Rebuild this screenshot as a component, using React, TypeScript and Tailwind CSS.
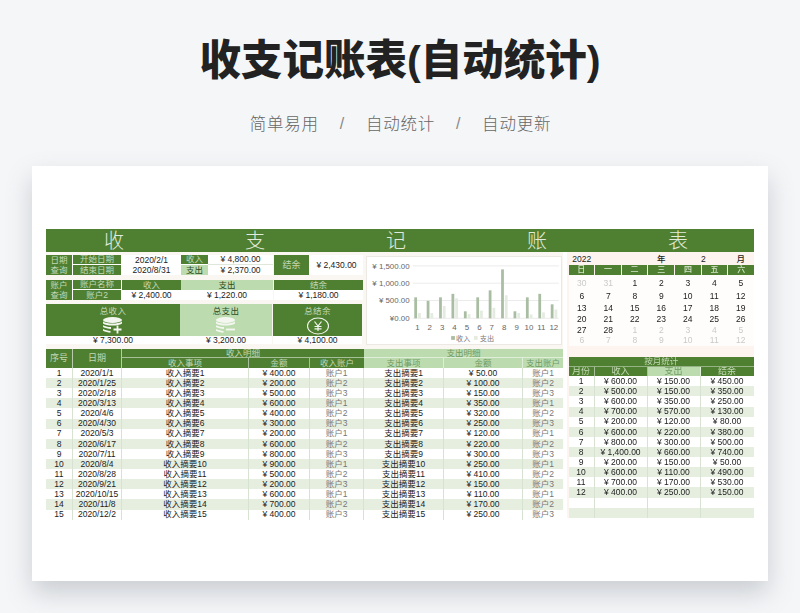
const FONT = "font-['Liberation_Sans','Noto_Sans_CJK_SC',sans-serif]";
const G = "bg-[#4f8032]";
const L = "bg-[#bcdcb0]";
const GT = "text-[#c3d8b4]";
const LT = "text-[#6f9a62]";

const income = [400,200,500,600,400,300,200,600,800,900,500,200,600,700,400];
const expense = [50,100,150,350,320,250,120,220,300,250,410,150,110,170,250];
const dates = ["2020/1/1","2020/1/25","2020/2/18","2020/3/13","2020/4/6","2020/4/30","2020/5/3","2020/6/17","2020/7/11","2020/8/4","2020/8/28","2020/9/21","2020/10/15","2020/11/8","2020/12/2"];
const months: [string,string,string][] = [
  ["600.00","150.00","450.00"],["500.00","150.00","350.00"],["600.00","350.00","250.00"],["700.00","570.00","130.00"],
  ["200.00","120.00","80.00"],["600.00","220.00","380.00"],["800.00","300.00","500.00"],["1,400.00","660.00","740.00"],
  ["200.00","150.00","50.00"],["600.00","110.00","490.00"],["700.00","170.00","530.00"],["400.00","250.00","150.00"],
];
const chartIn = [600,500,600,700,200,600,800,1400,200,600,700,400];
const chartOut = [150,150,350,570,120,220,300,660,150,110,170,250];

const rowCols = "grid grid-cols-[27px_49px_127px_61px_54px_80px_79px_40px]";
const monthCols = "grid grid-cols-[26px_53px_53px_53px]";

function Chart() {
  const base = 62;
  const scale = 53 / 1500;
  return (
    <svg viewBox="0 0 196 88" className="w-full h-full block">
      {[["¥ 1,500.00",9],["¥ 1,000.00",26.5],["¥ 500.00",44],["¥0.00",62]].map(([t,y]) => (
        <g key={t as string}>
          <line x1="46" x2="194" y1={y as number} y2={y as number} stroke="#e6e6e6" strokeWidth="0.8" />
          <text x="43" y={(y as number)+2.8} textAnchor="end" fontSize="8" fill="#666" fontFamily="Liberation Sans">{t}</text>
        </g>
      ))}
      {chartIn.map((v,i) => {
        const x = 50.5 + i * 12.55;
        return (
          <g key={i}>
            <rect x={x-2.8} y={base - v*scale} width="2.8" height={v*scale} fill="#a9bda2" />
            <rect x={x+1} y={base - chartOut[i]*scale} width="2.8" height={chartOut[i]*scale} fill="#e4ebe0" />
            <text x={x+0.3} y="73.5" textAnchor="middle" fontSize="8" fill="#666" fontFamily="Liberation Sans">{i+1}</text>
          </g>
        );
      })}
      <rect x="85" y="80" width="3.8" height="3.8" fill="#a9bda2" />
      <text x="90" y="85" fontSize="7.2" fill="#777" fontFamily="Noto Sans CJK SC">收入</text>
      <rect x="108" y="80" width="3.8" height="3.8" fill="#e4ebe0" />
      <text x="114" y="85" fontSize="7.2" fill="#777" fontFamily="Noto Sans CJK SC">支出</text>
    </svg>
  );
}

function Coins({ sign, color }: { sign: "+" | "-"; color: string }) {
  return (
    <svg width="22" height="17" viewBox="0 0 22 17" className="block">
      <ellipse cx="10.500" cy="3" rx="9.500" ry="3" fill={color} />
      <path d="M1 4.600c2 1.400 5.500 2 9.500 2s7.500-.6 9.500-2v1.800c-2 1.400-5.500 2-9.500 2s-7.500-.6-9.500-2Z" fill={color} />
      <path d="M1 8.200c2 1.200 5 1.800 8 1.900v1.800c-3-.1-6-.7-8-1.900Z" fill={color} />
      <path d="M1 12c2 1.200 5 1.800 7.500 1.900v1.800C6 15.600 3 15 1 13.800Z" fill={color} />
      {sign === "+" ? (
        <path d="M15.500 8.500v8M11.500 12.500h8" stroke={color} strokeWidth="1.800" />
      ) : (
        <path d="M11 12.500h9" stroke={color} strokeWidth="1.800" />
      )}
    </svg>
  );
}

function Yen() {
  return (
    <svg width="24" height="18" viewBox="0 0 24 18" className="block">
      <ellipse cx="12" cy="9" rx="10.500" ry="8" fill="none" stroke="#f2f6ee" strokeWidth="1.100" />
      <path d="M8.500 4.500 12 9l3.500-4.500M12 9v5M8.500 9.500h7M8.500 11.800h7" fill="none" stroke="#f2f6ee" strokeWidth="1.200" />
    </svg>
  );
}

function Cell({ className = "", children }: { className?: string; children?: React.ReactNode }) {
  return <div className={`flex items-center justify-center whitespace-nowrap overflow-hidden ${className}`}>{children}</div>;
}

function Forms() {
  return (
    <div className="w-[317px] flex flex-col text-[8.500px] text-[#222]">
      <div className="grid grid-cols-[27px_49px_59px_27px_65px_1px_36px_53px] grid-rows-[10px_10px] mt-[3px]">
        <Cell className={`${G} ${GT} border-r border-white`}>日期</Cell>
        <Cell className={`${G} ${GT} border-r border-white border-b`}>开始日期</Cell>
        <Cell className="bg-white">2020/2/1</Cell>
        <Cell className={`${G} ${GT} border-b border-white`}>收入</Cell>
        <Cell className="bg-white border-b border-[#dfe6da]">¥ 4,800.00</Cell>
        <div className="row-span-2" />
        <Cell className={`${G} ${GT} row-span-2 text-[9px] border-r border-white`}>结余</Cell>
        <Cell className="row-span-2 bg-white">¥ 2,430.00</Cell>
        <Cell className={`${G} ${GT} border-r border-white`}>查询</Cell>
        <Cell className={`${G} ${GT} border-r border-white`}>结束日期</Cell>
        <Cell className="bg-white">2020/8/31</Cell>
        <Cell className={`${L} text-[#2e4a22]`}>支出</Cell>
        <Cell className="bg-white">¥ 2,370.00</Cell>
      </div>
      <div className="grid grid-cols-[27px_49px_59px_92px_1px_89px] grid-rows-[10px_10px] mt-[5px]">
        <Cell className={`${G} ${GT} border-r border-white`}>账户</Cell>
        <Cell className={`${G} ${GT} border-r border-b border-white`}>账户名称</Cell>
        <Cell className={`${G} ${GT}`}>收入</Cell>
        <Cell className={`${L} text-[#2e4a22]`}>支出</Cell>
        <div className="row-span-2" />
        <Cell className={`${G} ${GT}`}>结余</Cell>
        <Cell className={`${G} ${GT} border-r border-white`}>查询</Cell>
        <Cell className={`${G} ${GT} border-r border-white`}>账户2</Cell>
        <Cell className="bg-white">¥ 2,400.00</Cell>
        <Cell className="bg-white">¥ 1,220.00</Cell>
        <Cell className="bg-white">¥ 1,180.00</Cell>
      </div>
      <div className="grid grid-cols-[134px_92px_1px_89px] grid-rows-[31.500px_8.500px] mt-[4px]">
        <div className={`${G} ${GT} flex flex-col items-center pt-[1px]`}>
          <span className="text-[8.500px] tracking-[0.4px] leading-[12px]">总收入</span>
          <Coins sign="+" color="#f4f7f0" />
        </div>
        <div className={`${L} text-[#2e4a22] flex flex-col items-center pt-[1px]`}>
          <span className="text-[8.500px] tracking-[0.4px] leading-[12px]">总支出</span>
          <Coins sign="-" color="#f4f7f0" />
        </div>
        <div />
        <div className={`${G} ${GT} flex flex-col items-center pt-[1px]`}>
          <span className="text-[8.500px] tracking-[0.4px] leading-[12px]">总结余</span>
          <Yen />
        </div>
        <Cell className="bg-white">¥ 7,300.00</Cell>
        <Cell className="bg-white">¥ 3,200.00</Cell>
        <div />
        <Cell className="bg-white">¥ 4,100.00</Cell>
      </div>
    </div>
  );
}

function Table() {
  return (
    <div className="text-[8.500px] text-[#222] mt-[3.500px]">
      <div className={`${rowCols} grid-rows-[9.500px_10px]`}>
        <Cell className={`${G} ${GT} row-span-2 border-r border-white/60 text-[9px]`}>序号</Cell>
        <Cell className={`${G} ${GT} row-span-2 border-r border-white/60 text-[9px]`}>日期</Cell>
        <Cell className={`${G} ${GT} col-span-3 border-b border-white/50`}>收入明细</Cell>
        <Cell className={`${L} ${LT} col-span-3 border-b border-white/50`}>支出明细</Cell>
        <Cell className={`${G} ${GT} border-r border-white/50`}>收入事项</Cell>
        <Cell className={`${G} ${GT} border-r border-white/50`}>金额</Cell>
        <Cell className={`${G} ${GT}`}>收入账户</Cell>
        <Cell className={`${L} ${LT} border-r border-white/50`}>支出事项</Cell>
        <Cell className={`${L} ${LT} border-r border-white/50`}>金额</Cell>
        <Cell className={`${L} ${LT}`}>支出账户</Cell>
      </div>
      {income.map((v, i) => (
        <div key={i} className={`${rowCols} h-[10.120px] ${i % 2 ? "bg-[#e6eee0]" : "bg-white"}`}>
          <Cell className="border-r border-[#d8e2d2]">{i + 1}</Cell>
          <Cell className="border-r border-[#d8e2d2]">{dates[i]}</Cell>
          <Cell className="border-r border-[#d8e2d2]">{`收入摘要${i + 1}`}</Cell>
          <Cell className="border-r border-[#d8e2d2]">{`¥ ${v}.00`}</Cell>
          <Cell className="border-r border-[#d8e2d2] text-[#777]">{`账户${(i % 3) + 1}`}</Cell>
          <Cell className="border-r border-[#d8e2d2]">{`支出摘要${i + 1}`}</Cell>
          <Cell className="border-r border-[#d8e2d2]">{`¥ ${expense[i]}.00`}</Cell>
          <Cell className="text-[#777]">{`账户${(i % 3) + 1}`}</Cell>
        </div>
      ))}
    </div>
  );
}

function Calendar() {
  const heads = ["日","一","二","三","四","五","六"];
  const days: [number, boolean][] = [
    [30,false],[31,false],[1,true],[2,true],[3,true],[4,true],[5,true],
    [6,true],[7,true],[8,true],[9,true],[10,true],[11,true],[12,true],
    [13,true],[14,true],[15,true],[16,true],[17,true],[18,true],[19,true],
    [20,true],[21,true],[22,true],[23,true],[24,true],[25,true],[26,true],
    [27,true],[28,true],[1,false],[2,false],[3,false],[4,false],[5,false],
    [6,false],[7,false],[8,false],[9,false],[10,false],[11,false],[12,false],
  ];
  return (
    <div className="bg-[#fdf4ef] h-[104.500px] pl-[1.500px] text-[#222] font-medium">
      <div className="grid grid-cols-7 h-[13px] items-end text-[8.500px] pb-[2px]">
        <div className="text-center">2022</div>
        <div />
        <div />
        <div className="text-center">年</div>
        <div />
        <div className="text-center -ml-[22px]">2</div>
        <div className="text-center ">月</div>
      </div>
      <div className="grid grid-cols-7 gap-x-px h-[10px]">
        {heads.map((h) => (
          <Cell key={h} className={`${G} text-[#d5e4ca] text-[8px]`}>{h}</Cell>
        ))}
      </div>
      <div className="grid grid-cols-7 grid-rows-[13px_12.500px_11.500px_12px_10px_10px] pt-[1.500px] text-[8.500px] bg-[#fffdfb]">
        {days.map(([d, on], i) => (
          <Cell key={i} className={on ? "text-[#222]" : "text-[#c9c9c9] font-normal"}>{d}</Cell>
        ))}
      </div>
    </div>
  );
}

function Months() {
  return (
    <div className="text-[8.500px] text-[#222] bg-[#fdf4ef]">
      <div className="ml-[1.500px]">
        <Cell className={`${G} ${GT} h-[10px] border-b border-white/40`}>按月统计</Cell>
        <div className={`${monthCols} h-[9.700px]`}>
          <Cell className={`${G} ${GT} border-r border-white/50 text-[9px]`}>月份</Cell>
          <Cell className={`${G} ${GT} border-r border-white/50 text-[9px]`}>收入</Cell>
          <Cell className={`${L} ${LT} border-r border-white/50 text-[9px]`}>支出</Cell>
          <Cell className={`${G} ${GT} text-[9px]`}>结余</Cell>
        </div>
        {Array.from({ length: 14 }).map((_, i) => {
          const m = months[i];
          return (
            <div key={i} className={`${monthCols} h-[10.120px] ${i % 2 ? "bg-[#e6eee0]" : "bg-white"}`}>
              <Cell className="border-r border-[#d8e2d2]">{m ? i + 1 : ""}</Cell>
              <Cell className="border-r border-[#d8e2d2]">{m ? `¥ ${m[0]}` : ""}</Cell>
              <Cell className="border-r border-[#d8e2d2]">{m ? `¥ ${m[1]}` : ""}</Cell>
              <Cell>{m ? `¥ ${m[2]}` : ""}</Cell>
            </div>
          );
        })}
      </div>
    </div>
  );
}

export default function App() {
  return (
    <div className={`w-[800px] h-[613px] overflow-hidden bg-[#f5f6f8] leading-none ${FONT}`}>
      <h1 className="pt-[31px] h-[100px] text-center text-[41.500px] leading-[60px] font-black text-[#222]">
        收支记账表(自动统计)
      </h1>
      <div className="flex justify-center items-center h-[49px] pb-[1px] pl-[1px] text-[16.500px] text-[#666] tracking-[0.8px] font-light">
        <span>简单易用</span>
        <span className="w-[47px] text-center text-[16px] font-normal text-[#888]">/</span>
        <span>自动统计</span>
        <span className="w-[47px] text-center text-[16px] font-normal text-[#888]">/</span>
        <span>自动更新</span>
      </div>
      <div className="ml-[32px] mt-[17px] w-[736px] h-[415px] bg-white pt-[63px] pl-[14px] shadow-[0_12px_24px_rgba(90,100,110,0.28)]">
        <div className="w-[708px] blur-[0.3px]">
          <div className={`${G} h-[23px] flex justify-between items-center pl-[58px] pr-[66px] text-[20px] font-extralight text-[#e3ecdc]`}>
            <span>收</span><span>支</span><span>记</span><span>账</span><span>表</span>
          </div>
          <div className="flex">
            <div className="w-[517px] bg-[#faf6f1]">
              <div className="flex">
                <Forms />
                <div className="w-[196px] h-[89px] ml-[3px] mt-[4px] bg-white border border-[#ece8e3]">
                  <Chart />
                </div>
              </div>
              <Table />
            </div>
            <div className="w-[191px] pl-[4px]">
              <Calendar />
              <Months />
            </div>
          </div>
        </div>
      </div>
    </div>
  );
}
